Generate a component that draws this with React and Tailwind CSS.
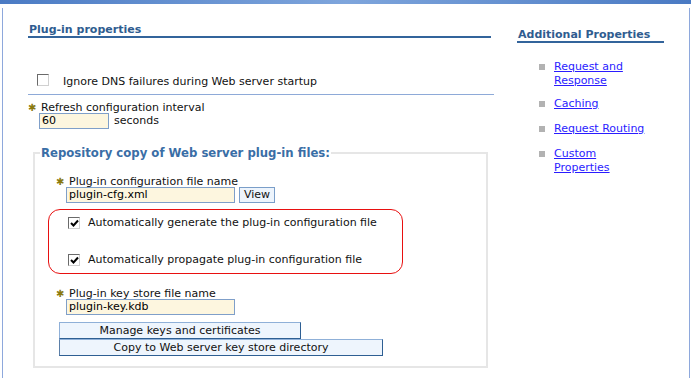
import React from "react";

function Star() {
  return (
    <span className="inline-block w-[13px] text-[#8a7a10] text-[10px] leading-[14px]">✱</span>
  );
}

function Box({ checked }) {
  return (
    <span className="relative inline-block w-[12px] h-[12px] bg-white border border-t-[#6a6a6a] border-l-[#6a6a6a] border-r-[#d0d0d0] border-b-[#d0d0d0] shrink-0">
      {checked && (
        <svg className="absolute left-[1px] top-[1px]" width="9" height="9" viewBox="0 0 9 9">
          <path d="M1 4 L3.5 6.5 L8 1.5" stroke="#000" strokeWidth="2" fill="none" />
        </svg>
      )}
    </span>
  );
}

function Field({ value, w }) {
  return (
    <div
      className={`h-[16px] ${w} bg-[#fdf6df] border border-[#7f9fc9] pl-[2px] text-[11px] leading-[14px] text-black`}
    >
      {value}
    </div>
  );
}

function Link({ children, mt }) {
  return (
    <div className={`flex ${mt}`}>
      <span className="w-[6px] h-[6px] bg-[#b2b2b2] mt-[4px] shrink-0"></span>
      <a className="ml-[9px] w-[96px] text-[#2a1cff] underline decoration-[#2a1cff] leading-[14px]">
        {children}
      </a>
    </div>
  );
}

export default function App() {
  return (
    <div
      className="w-[691px] h-[378px] bg-white overflow-hidden text-[11px] leading-[14px] text-[#111]"
      style={{ fontFamily: '"DejaVu Sans", Verdana, sans-serif' }}
    >
      <div className="h-[4px] bg-gradient-to-r from-[#4b7bc4] via-[#7ea5dc] to-[#4a7ac3]"></div>
      <div className="mt-[4px] ml-[2px] w-[688px] h-[370px] border-l border-r border-[#8ea8dc] flex">
        {/* left column */}
        <div className="ml-[25px] w-[466px]">
          <div className="pt-[15px] w-[463px] border-b-2 border-[#33649b] h-[30px]">
            <span className="ml-[1px] font-bold text-[#2f5c90]">Plug-in properties</span>
          </div>
          <div className="mt-[37px] flex items-center h-[14px]">
            <span className="ml-[9px]"><Box /></span>
            <span className="ml-[14px]">Ignore DNS failures during Web server startup</span>
          </div>
          <div className="mt-[5px] h-px bg-[#8eaad8]"></div>
          <div className="mt-[6px] h-[12px] flex">
            <Star />
            <span>Refresh configuration interval</span>
          </div>
          <div className="ml-[11px] flex items-center">
            <Field value="60" w="w-[70px]" />
            <span className="ml-[5px]">seconds</span>
          </div>
          <fieldset className="mt-[16px] ml-[5px] w-[455px] h-[223px] border-2 border-[#e6e6e6]">
            <legend className="ml-[5px] px-[1px] font-bold text-[11.7px] leading-[16px] text-[#3a6ea6]">
              Repository copy of Web server plug-in files:
            </legend>
            <div className="mt-[14px] h-[12px] ml-[21px] flex">
              <Star />
              <span>Plug-in configuration file name</span>
            </div>
            <div className="ml-[31px] flex">
              <Field value="plugin-cfg.xml" w="w-[169px]" />
              <div className="ml-[4px] h-[16px] px-[4px] bg-[#edf4fc] border border-[#7a9ec9] leading-[14px]">View</div>
            </div>
            <div className="mt-[6px] ml-[13px] w-[355px] h-[65px] border border-[#e81010] rounded-[12px]">
              <div className="mt-[6px] ml-[19px] flex items-center h-[14px]">
                <Box checked />
                <span className="ml-[8px]">Automatically generate the plug-in configuration file</span>
              </div>
              <div className="mt-[23px] ml-[19px] flex items-center h-[14px]">
                <Box checked />
                <span className="ml-[8px]">Automatically propagate plug-in configuration file</span>
              </div>
            </div>
            <div className="mt-[13px] h-[12px] ml-[21px] flex">
              <Star />
              <span>Plug-in key store file name</span>
            </div>
            <div className="ml-[31px]">
              <Field value="plugin-key.kdb" w="w-[169px]" />
            </div>
            <div className="mt-[7px] ml-[24px] w-[242px] h-[17px] bg-[#eef5fd] border border-[#8fb0d8] border-r-[#2e5f93] border-b-[#2e5f93] text-center leading-[15px]">
              Manage keys and certificates
            </div>
            <div className="ml-[24px] w-[324px] h-[17px] bg-[#eef5fd] border border-[#8fb0d8] border-l-[#5b7fa8] border-r-[#2e5f93] border-b-[#2e5f93] text-center leading-[15px]">
              Copy to Web server key store directory
            </div>
          </fieldset>
        </div>
        {/* right column */}
        <div className="ml-[23px] w-[147px]">
          <div className="pt-[20px] border-b-2 border-[#33649b] h-[35px]">
            <span className="ml-[1px] font-bold text-[#2f5c90]">Additional Properties</span>
          </div>
          <div className="ml-[22px] mt-[17px] flex flex-col">
            <Link>Request and Response</Link>
            <Link mt="mt-[9px]">Caching</Link>
            <Link mt="mt-[11px]">Request Routing</Link>
            <Link mt="mt-[11px]">Custom Properties</Link>
          </div>
        </div>
      </div>
    </div>
  );
}
